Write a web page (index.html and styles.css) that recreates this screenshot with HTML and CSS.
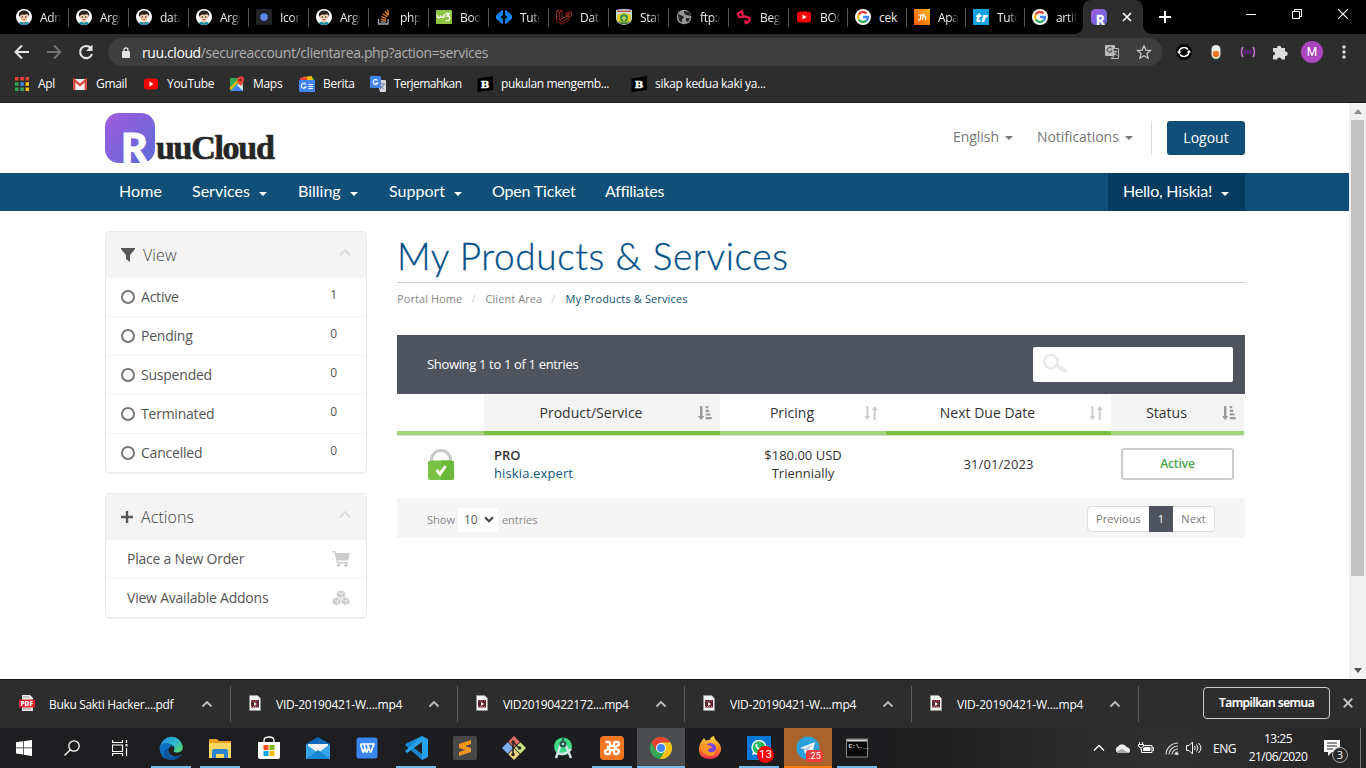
FILE: index.html
```html
<!DOCTYPE html>
<html lang="id">
<head>
<meta charset="utf-8">
<title>My Products &amp; Services - RuuCloud</title>
<link rel="stylesheet" href="styles.css">
</head>
<body>
<svg class="defs" aria-hidden="true">
  <defs>
    <linearGradient id="violet" x1="0" y1="0" x2="1" y2="1"><stop offset="0" stop-color="#a35be0"/><stop offset="1" stop-color="#5b6bd8"/></linearGradient>
    <linearGradient id="sea" x1="0" y1="0" x2="1" y2="1"><stop offset="0" stop-color="#1b87d6"/><stop offset=".5" stop-color="#2bb9d3"/><stop offset="1" stop-color="#5fd860"/></linearGradient>
    <linearGradient id="fire" x1="0" y1="0" x2="0" y2="1"><stop offset="0" stop-color="#ffde3d"/><stop offset=".5" stop-color="#ff8a1e"/><stop offset="1" stop-color="#f0284f"/></linearGradient>
    <linearGradient id="amber" x1="0" y1="1" x2="1" y2="0"><stop offset="0" stop-color="#ff5a0a"/><stop offset="1" stop-color="#ffb51c"/></linearGradient>
    <clipPath id="disc"><circle cx="8" cy="8" r="8"/></clipPath>
  </defs>
  <symbol id="avatar" viewBox="0 0 16 16"><circle cx="8" cy="8" r="8" fill="#fff"/><g clip-path="url(#disc)"><path d="M2.500 16c0-3 2-3.600 5.500-3.600s5.500.600 5.500 3.600z" fill="#1c8fa8"/><path d="M6 10h4v3l-2 1-2-1z" fill="#edc3a0"/><ellipse cx="8" cy="7.600" rx="4.300" ry="4.400" fill="#f7d3b5"/><path d="M3 8C2.300 3.500 4.500 1.300 8.300 1.400c4.200.1 5.400 3 4.700 6.600-.5-1.500-.8-2.400-1.800-2.800-2 .8-4 .4-5 .2C5 5.900 3.600 6.700 3 8z" fill="#26221f"/><circle cx="6.300" cy="8" r=".8" fill="#222"/><circle cx="9.700" cy="8" r=".8" fill="#222"/><path d="M6.500 10.200q1.500 1 3 0" stroke="#a33" fill="none" stroke-width=".7"/></g></symbol>
  <symbol id="google" viewBox="0 0 16 16"><circle cx="8" cy="8" r="8" fill="#fff"/><g fill="none" stroke-width="2.400"><path d="M11.600 4.500A5 5 0 0 0 3.700 5.500" stroke="#ea4335"/><path d="M3.700 5.500a5 5 0 0 0 0 5" stroke="#fbbc05"/><path d="M3.700 10.500a5 5 0 0 0 7.600 1.200" stroke="#34a853"/><path d="M8 8h5a5 5 0 0 1-1.700 3.700" stroke="#4285f4"/></g></symbol>
  <symbol id="tube" viewBox="0 0 16 16"><rect x="1" y="2.500" width="14" height="11" rx="3" fill="#f00"/><path d="M6.500 5.600v4.800L10.600 8z" fill="#fff"/></symbol>
  <symbol id="brainly" viewBox="0 0 16 16"><path d="M.5 2.500 16 0v14L.5 16z" fill="#000"/><text x="3.800" y="12" class="b-glyph">B</text></symbol>
  <symbol id="movie" viewBox="0 0 12 16"><path d="M.5.500h8L11.500 3.500v12H.5z" fill="#f8f8f8" stroke="#999" stroke-width=".6"/><path d="M8.500.500v3h3" fill="#ddd"/><rect x="2" y="5" width="8" height="7.500" fill="#5c2430"/><path d="M2 6h8M2 11.500h8" stroke="#e0716b" stroke-dasharray="1 1"/><path d="M5 7v4l3-2z" fill="#fff"/></symbol>
  <symbol id="up" viewBox="0 0 12 8"><path d="m1.500 6.500 4.500-4.500 4.500 4.500" fill="none" stroke="currentColor" stroke-width="1.900"/></symbol>
  <symbol id="sort" viewBox="0 0 14 14"><path d="M2.400 0h2v10h2L3.400 14 .4 10h2zM9.700 14h2V4h2L10.700 0l-3 4h2z" fill="currentColor"/></symbol>
  <symbol id="sorted" viewBox="0 0 14 14"><path d="M2 0h2.400v10h2L3.200 14 0 10h2zM7.700 0h2.500v2.200H7.700zM7.700 3.700h3.500v2.200H7.700zM7.700 7.400h4.700v2.200H7.700zM7.700 11h6v2.300h-6z" fill="currentColor"/></symbol>
  <symbol id="ruu" viewBox="0 0 50 50"><rect width="50" height="50" rx="14" fill="url(#violet)"/><text x="16" y="50" class="r-glyph">R</text></symbol>
</svg>

<header class="tabs">
  <div class="tab"><svg><use href="#avatar"/></svg><span>Adm</span></div>
  <div class="tab"><svg><use href="#avatar"/></svg><span>Argo</span></div>
  <div class="tab"><svg><use href="#avatar"/></svg><span>data</span></div>
  <div class="tab"><svg><use href="#avatar"/></svg><span>Argo</span></div>
  <div class="tab"><svg viewBox="0 0 16 16"><rect width="16" height="16" rx="1" fill="#202327"/><circle cx="8" cy="8" r="3.800" fill="#5b86f0"/></svg><span>Icon</span></div>
  <div class="tab"><svg><use href="#avatar"/></svg><span>Argo</span></div>
  <div class="tab"><svg viewBox="0 0 16 16" fill="none" stroke-width="1.300"><path d="M2.500 10v5h9.500v-5M4.500 12.800H10" stroke="#aaa"/><path d="m4.700 10.500 5.500.7M5.200 7.700l5.200 1.800M6.600 4.800l4.600 3M8.900 2.300l3.300 4.300M11.700.5l.9 5.400" stroke="#f48024"/></svg><span>php</span></div>
  <div class="tab"><svg viewBox="0 0 16 16"><rect y="1" width="16" height="14" fill="#8bc53f"/><path d="M1 5.500q0 3 2 3t1.500-2q0 2 2 2t2-3.500M9.500 4.500h4L11 7q4-.2 2.500 3.500-1.500 2.300-4 .8" fill="none" stroke="#fff" stroke-width="1.300"/></svg><span>Boo</span></div>
  <div class="tab"><svg viewBox="0 0 16 16"><path d="M7 2v3.700L4.700 8 7 10.300V14L6 15l-6-5.500v-3L6 1zM9 2v3.700L11.300 8 9 10.300V14l1 1 6-5.500v-3L10 1z" fill="#0a84ff"/></svg><span>Tuto</span></div>
  <div class="tab"><svg viewBox="0 0 16 16"><path d="M.6 1.800 3.300.5 6 1.800v8l6-3.500V3.500L14 2.300l1.500 1.200v3.400L13 8.200v2.600L6 15.300.6 12zM3.300 3.300V11L6 12.700l6-3.500M.6 1.800l2.700 1.500L6 1.800M10 3.700l3 1.500 2.500-1.700M13 5.200v3M6 9.800 3.300 11M10 3.700v3l3 1.500" fill="none" stroke="#a52b25" stroke-width=".9"/></svg><span>Data</span></div>
  <div class="tab"><svg viewBox="0 0 16 16"><path d="M0 1q8-2 16 0v9q-1 5-8 6-7-1-8-6z" fill="#b9dbe4"/><path d="M1 1.500h14v1.500H1z" fill="#d0524a"/><path d="M1 6q7-4 14 0v5q-2 4-7 4t-7-4z" fill="#e7ce24"/><circle cx="8" cy="9" r="4" fill="#3b9441"/><path d="M6 9h4M8 7v5" stroke="#fff27a"/><path d="M2 12q6 3 12 0l-3 3H5z" fill="#2d773b"/></svg><span>Stati</span></div>
  <div class="tab"><svg viewBox="0 0 16 16"><circle cx="8" cy="8" r="7.300" fill="#969696"/><path d="m2 5 5 2 1 2-2 1v4l-3-3zM8 2l5 1 2 4-5-1-2-2zM10 9h4l-2 4-2-1z" fill="#252525"/></svg><span>ftp:/</span></div>
  <div class="tab"><svg viewBox="0 0 16 16"><path d="M6.800 1.500 1.800 5l1.500 3.300L9 7.500l4.500 1.500v2.800L9.500 15M6.500 3v3.500M9.500 14.500V11" fill="none" stroke="#ef1b50" stroke-width="2.200"/></svg><span>Beg</span></div>
  <div class="tab narrow"><svg><use href="#tube"/></svg><span>BOO</span></div>
  <div class="tab narrow"><svg><use href="#google"/></svg><span class="full">cek</span></div>
  <div class="tab narrow"><svg viewBox="0 0 16 16"><rect width="16" height="16" fill="url(#amber)"/><path d="M7 5.500 6.500 10q-.3 1.300-2.500.7M9.300 4.500 8.600 11M9 8.200q3-1.500 2.800.3L11.500 11M4.500 6h7" fill="none" stroke="#fff" stroke-width="1.200"/></svg><span>Apa</span></div>
  <div class="tab narrow"><svg viewBox="0 0 16 16"><rect width="16" height="16" fill="#13a2e2"/><text x="2.500" y="12.500" class="tr-glyph">tr</text></svg><span>Tuto</span></div>
  <div class="tab narrow last"><svg><use href="#google"/></svg><span>artif</span></div>
  <div class="tab-active"><svg class="fav"><use href="#ruu"/></svg><svg class="close" viewBox="0 0 10 10"><path d="m1 1 8 8M9 1 1 9" stroke="#fff" stroke-width="1.700"/></svg></div>
  <svg class="new-tab" viewBox="0 0 12 12"><path d="M6 0v12M0 6h12" stroke="#fff" stroke-width="2"/></svg>
  <div class="window-buttons">
    <svg viewBox="0 0 10 10"><path d="M0 5.500h10" stroke="#fff"/></svg>
    <svg viewBox="0 0 10 10" fill="none" stroke="#fff"><path d="M.5 2.500h7v7h-7zM2.500 2.500v-2h7v7h-2"/></svg>
    <svg viewBox="0 0 10 10"><path d="m0 0 10 10M10 0 0 10" stroke="#fff" stroke-width="1.100"/></svg>
  </div>
</header>

<div class="toolbar">
  <svg class="nav-ic" viewBox="0 0 16 16" fill="none" stroke="#e4e4e4" stroke-width="2"><path d="M15 8H2M8 1.500 1.500 8 8 14.500"/></svg>
  <svg class="nav-ic" viewBox="0 0 16 16" fill="none" stroke="#737373" stroke-width="1.800"><path d="M1 8h13M8 1.500 14.500 8 8 14.500"/></svg>
  <svg class="nav-ic" viewBox="0 0 16 16"><path d="M12.800 4A6.100 6.100 0 1 0 14 10" fill="none" stroke="#e4e4e4" stroke-width="2.100"/><path d="M14.500.5V7H8z" fill="#e4e4e4"/></svg>
  <div class="omnibox">
    <svg class="lock" viewBox="0 0 8 11"><rect y="4" width="8" height="7" rx="1" fill="#e4e4e4"/><path d="M2 5V3q0-2.200 2-2.200T6 3v2" fill="none" stroke="#e4e4e4" stroke-width="1.300"/></svg>
    <div class="url"><b>ruu.cloud</b>/secureaccount/clientarea.php?action=services</div>
    <svg class="o-ic" viewBox="0 0 16 16"><rect x="1" y="1" width="10" height="11" rx="1" fill="#bbb"/><path d="M8 4.300A2.600 2.600 0 1 0 8.300 7H6" stroke="#3c3c3c" fill="none"/><path d="M9 4.500h5.500v10H7L10 12z" fill="#3c3c3c" stroke="#bbb"/><path d="M8.500 7.500h5M11 6.500v1M12.500 7.500q-1 3-3.500 4M9.500 8q1.500 2.500 4 3.500" stroke="#bbb" stroke-width=".9" fill="none"/></svg>
    <svg class="o-ic star" viewBox="0 0 16 16"><path d="m8 1.800 1.900 4.300 4.600.4-3.500 3.100 1 4.600L8 11.800l-4 2.400 1-4.600-3.500-3.100 4.600-.4z" fill="none" stroke="#c4c4c4" stroke-width="1.300"/></svg>
  </div>
  <div class="extensions">
    <svg viewBox="0 0 16 16"><circle cx="8" cy="8" r="8" fill="#000"/><path d="M3 8a5 5 0 0 1 9-2.500M13 8a5 5 0 0 1-9 2.500" fill="none" stroke="#fff" stroke-width="1.500"/><path d="m.8 7.500 2.400 2.800 2.300-2.800zM15.200 8.500 13 5.700l-2.500 2.800z" fill="#fff"/></svg>
    <svg viewBox="0 0 16 16"><rect x="3.500" y="1" width="9" height="14" rx="4.500" fill="#eaf0ed"/><circle cx="8" cy="10" r="3.300" fill="#f5792b"/></svg>
    <svg viewBox="0 0 16 16"><circle cx="8" cy="8" r="1.600" fill="#7b1fa2"/><path d="M5.500 5.500q-1.500 2.500 0 5M10.500 5.500q1.500 2.500 0 5" fill="none" stroke="#7b1fa2" stroke-width="1.300"/><path d="M3 3Q0 8 3 13M13 3q3 5 0 10" fill="none" stroke="#c27ad2" stroke-width="1.500"/></svg>
    <svg viewBox="0 0 16 16"><path d="M1 4h4a2.200 2.200 0 1 1 4.400 0H13v3.700a2.200 2.200 0 1 1 0 4.300v3.500H9.400a2.100 2.100 0 1 0-4.200 0H1v-4a2 2 0 1 0 0-4z" fill="#dedede"/></svg>
    <div class="profile">M</div>
    <svg class="menu" viewBox="0 0 16 16" fill="#dedede"><circle cx="8" cy="3" r="1.700"/><circle cx="8" cy="8" r="1.700"/><circle cx="8" cy="13" r="1.700"/></svg>
  </div>
</div>

<nav class="bookmarks">
  <a class="bk1"><svg viewBox="0 0 16 16"><g><path fill="#ea4335" d="M1 1h3.500v3.500H1zM6.300 1h3.500v3.500H6.300zM11.500 1H15v3.500h-3.500z"/><path fill="#34a853" d="M1 6.300h3.500v3.500H1zM1 11.500h3.500V15H1z"/><path fill="#4285f4" d="M6.300 6.300h3.500v3.500H6.300z"/><path fill="#34a853" d="M6.300 11.500h3.500V15H6.300z"/><path fill="#fbbc05" d="M11.500 6.300H15v3.500h-3.500zM11.500 11.500H15V15h-3.500z"/></g></svg><span>Apl</span></a>
  <a class="bk2"><svg viewBox="0 0 16 16"><rect x="1" y="3" width="14" height="11" rx="1" fill="#f4f4f4"/><path d="M2.200 14V4L8 9l5.800-5v10" fill="none" stroke="#db4437" stroke-width="2.300"/></svg><span>Gmail</span></a>
  <a class="bk3"><svg><use href="#tube"/></svg><span>YouTube</span></a>
  <a class="bk4"><svg viewBox="0 0 16 16"><rect x="1" y="2" width="13" height="13" rx="1" fill="#34a853"/><path d="M2 15 13 4l1 11z" fill="#eee"/><path d="m2 15 6-6 6 6z" fill="#4285f4"/><path d="m1 13 8-8" stroke="#fbbc05" stroke-width="2"/><path d="M11.500 10Q8 6.500 8 4t3.500-3.500T15 4q0 2.500-3.500 6z" fill="#ea4335"/><circle cx="11.500" cy="4" r="1.300" fill="#7d211c"/></svg><span>Maps</span></a>
  <a class="bk5"><svg viewBox="0 0 16 16"><path d="M1 2h14v4H1z" fill="#34a853"/><path d="m4 1 9-1 1 5H4z" fill="#fbbc05"/><path d="m1 2 7-1v5H1z" fill="#ea4335"/><rect y="4" width="16" height="12" rx="1" fill="#4285f4"/><path d="M7 8.500A2.500 2.500 0 1 0 7 11H5M9.500 8.500H14M9.500 10.500H14M9.500 12.500H14" stroke="#fff" fill="none" stroke-width="1.200"/></svg><span>Berita</span></a>
  <a class="bk6"><svg viewBox="0 0 16 16"><path d="M7 4h8q1 0 1 1v10q0 1-1 1H10z" fill="#d8d8d8"/><rect width="11" height="12" rx="1" fill="#4285f4"/><path d="M7.500 4.500A2.400 2.400 0 1 0 7.800 7H5.500" stroke="#fff" fill="none" stroke-width="1.100"/><path d="M9 8h6M12 7v1M14 8q-1 3-4 5M10 9q1 2 4 4" stroke="#6587b4" fill="none"/></svg><span>Terjemahkan</span></a>
  <a class="bk7"><svg><use href="#brainly"/></svg><span>pukulan mengemb...</span></a>
  <a class="bk8"><svg><use href="#brainly"/></svg><span>sikap kedua kaki ya...</span></a>
</nav>

<div class="viewport">
  <div class="page">
    <div class="site-head">
      <div class="logo"><svg><use href="#ruu"/></svg><span>uuCloud</span></div>
      <div class="top-links"><span class="caret t-eng">English</span><span class="caret t-not">Notifications</span><i></i><a class="logout">Logout</a></div>
    </div>
    <div class="site-nav">
      <div class="links"><a class="n1">Home</a><a class="n2 caret">Services</a><a class="n3 caret">Billing</a><a class="n4 caret">Support</a><a class="n5">Open Ticket</a><a class="n6">Affiliates</a></div>
      <a class="hello caret">Hello, Hiskia!</a>
    </div>
    <div class="content">
      <aside>
        <section class="panel">
          <h3><svg viewBox="0 0 14 14"><path d="M0 0h14v1L9 7v7l-4-3V7L0 1z" fill="#555"/></svg><span>View</span><svg class="chev"><use href="#up"/></svg></h3>
          <div class="row"><i></i><span>Active</span><b>1</b></div>
          <div class="row"><i></i><span>Pending</span><b>0</b></div>
          <div class="row"><i></i><span>Suspended</span><b>0</b></div>
          <div class="row"><i></i><span>Terminated</span><b>0</b></div>
          <div class="row"><i></i><span>Cancelled</span><b>0</b></div>
        </section>
        <section class="panel">
          <h3 class="actions"><svg viewBox="0 0 12 12"><path d="M6 0v12M0 6h12" stroke="#555" stroke-width="2.400"/></svg><span>Actions</span><svg class="chev"><use href="#up"/></svg></h3>
          <div class="row act"><span>Place a New Order</span><svg viewBox="0 0 18 16" fill="#ccc"><path d="M0 0h3.500l.5 2h14l-1.800 7.500H6l.3 1.500h9.500v1.500H5L2.500 1.500H0z"/><circle cx="6.500" cy="14.300" r="1.700"/><circle cx="14" cy="14.300" r="1.700"/></svg></div>
          <div class="row act"><span>View Available Addons</span><svg viewBox="0 0 18 16"><g fill="#ccc" stroke="#fff" stroke-width=".6"><path d="m9 0 4.300 1.800v4.700L9 8.500 4.700 6.500V1.800zM4.800 7l4.200 1.800v4.700l-4.200 2-4.500-2V8.800zM13.200 7l4.500 1.800v4.700l-4.500 2-4.200-2V8.800z"/><path d="m5.500 2.400 3.500 1.500 3.500-1.500M1.200 9.400l3.600 1.500 3.600-1.500M9.600 9.400l3.600 1.500 3.600-1.500M9.800 4v3.600M5.600 11v3.600M14 11v3.600" fill="none"/></g></svg></div>
        </section>
      </aside>
      <main>
        <h1>My Products &amp; Services</h1>
        <div class="crumbs"><span>Portal Home</span><em>/</em><span>Client Area</span><em>/</em><span class="here">My Products &amp; Services</span></div>
        <div class="table-top"><span>Showing 1 to 1 of 1 entries</span><div class="search"><svg viewBox="0 0 26 22" fill="none" stroke="#e7e9ea"><circle cx="8" cy="8.500" r="6.700" stroke-width="2.500"/><path d="m14 12.500 8 5.500" stroke-width="4" stroke-linecap="round"/></svg></div></div>
        <div class="grid thead">
          <div></div>
          <div class="sorted dark"><span>Product/Service</span><svg><use href="#sorted"/></svg></div>
          <div><span>Pricing</span><svg><use href="#sort"/></svg></div>
          <div class="dark"><span>Next Due Date</span><svg><use href="#sort"/></svg></div>
          <div class="sorted"><span>Status</span><svg><use href="#sorted"/></svg></div>
        </div>
        <div class="grid tbody">
          <div><svg class="padlock" viewBox="0 0 26 32"><path d="M3.500 15v-3a9.500 9.500 0 0 1 19 0v3" fill="none" stroke="#c8c8c8" stroke-width="3"/><path d="M0 13.500 3 12.500h20l3 1v16q0 2.500-2.500 2.500h-21Q0 32 0 29.500z" fill="#7bc144"/><path d="M13 12.500h10l3 1v16q0 2.500-2.500 2.500H13z" fill="#6cb838"/><path d="m8.500 22 3.500 4 5.500-8" fill="none" stroke="#fff" stroke-width="3"/></svg></div>
          <div class="product"><strong>PRO</strong><a>hiskia.expert</a></div>
          <div class="price"><span>$180.00 USD</span><span>Triennially</span></div>
          <div class="due">31/01/2023</div>
          <div class="stat"><span>Active</span></div>
        </div>
        <div class="table-foot"><span>Show</span><div class="select">10<svg viewBox="0 0 10 7"><path d="m1 1.200 4 4 4-4" fill="none" stroke="#444" stroke-width="2.200"/></svg></div><span>entries</span><div class="pager"><a class="prev">Previous</a><a class="cur">1</a><a class="next">Next</a></div></div>
      </main>
    </div>
  </div>
  <div class="scroll"><svg viewBox="0 0 8 5"><path d="M0 5h8L4 0z" fill="#8b8b8b"/></svg><div class="thumb"></div><svg viewBox="0 0 8 5"><path d="M0 0h8L4 5z" fill="#505050"/></svg></div>
</div>

<div class="downloads">
  <div class="dl"><svg class="file pdf" viewBox="0 0 16 16"><path d="M3 0h8l3 3v13H3z" fill="#eee"/><path d="M4 2h6M4 14h8" stroke="#999"/><rect y="4.500" width="16" height="8" rx="1" fill="#e3202c"/><text x="1.500" y="11" class="pdf-glyph">PDF</text></svg><span class="d1">Buku Sakti Hacker....pdf</span><svg class="dchev"><use href="#up"/></svg></div>
  <div class="dl"><svg class="file"><use href="#movie"/></svg><span>VID-20190421-W....mp4</span><svg class="dchev"><use href="#up"/></svg></div>
  <div class="dl"><svg class="file"><use href="#movie"/></svg><span class="d3">VID20190422172....mp4</span><svg class="dchev"><use href="#up"/></svg></div>
  <div class="dl"><svg class="file"><use href="#movie"/></svg><span>VID-20190421-W....mp4</span><svg class="dchev"><use href="#up"/></svg></div>
  <div class="dl"><svg class="file"><use href="#movie"/></svg><span>VID-20190421-W....mp4</span><svg class="dchev"><use href="#up"/></svg></div>
  <a class="show-all">Tampilkan semua</a>
  <svg class="dclose" viewBox="0 0 10 10"><path d="m.7.700 8.600 8.600M9.300.700.700 9.300" stroke="#ccc" stroke-width="1.800"/></svg>
</div>

<footer class="taskbar">
  <div class="sys"><svg class="s16" viewBox="0 0 16 16" fill="#fff"><path d="M0 2.300 7 1.300v6.300H0zM7.700 1.200 16 0v7.600H7.700zM0 8.300h7v6.300l-7-1zM7.700 8.300H16V16l-8.300-1.200z"/></svg></div>
  <div class="sys"><svg class="s16" viewBox="0 0 16 16" fill="none" stroke="#fff" stroke-width="1.300"><circle cx="10" cy="6" r="5.200"/><path d="M6.300 9.700.500 15.500"/></svg></div>
  <div class="sys"><svg class="s16" viewBox="0 0 16 16" fill="none" stroke="#fff" stroke-width="1.200"><path d="M.5 0v2.500h10V0M.5 5h10v6.500H.5zM.5 16v-2.500h10V16M14.500 0v3M14.500 8v8"/><path d="M13.500 4h2v2.500h-2z" fill="#fff" stroke="none"/></svg></div>
  <div class="app on edge"><svg viewBox="0 0 24 24"><path d="M1 11A11.500 11.500 0 0 1 23.700 10c.8 5-3 7-7 6.500-2-.3-2.500-1-1.500-2.500 1-4-2-6-6-6Q4 8 1 11z" fill="url(#sea)"/><path d="M.4 12Q1 7 7 7q6 0 7.500 4.500Q12 9 9.800 12q-2 5 4 8 5 2 9-2Q19 24 12 24 1.500 23.500.4 12z" fill="#1170bd"/><path d="M9.500 12q-3 7 4 9 5 1 9-3Q18 24.500 12 24 3 22 5.500 15 7 12 9.500 12z" fill="#0c519b"/></svg></div>
  <div class="app on"><svg viewBox="0 0 24 24"><path d="M1 3h8l2 2h12v17H1z" fill="#e6a21d"/><rect x="1" y="7" width="22" height="15" fill="#ffd75e"/><path d="M4 22v-7q0-2 2-2h12q2 0 2 2v7h-4v-4H8v4z" fill="#2a84ce"/></svg></div>
  <div class="app"><svg viewBox="0 0 24 24"><path d="M7 8V4.500Q7 1 12 1t5 3.500V8" fill="none" stroke="#fff" stroke-width="1.300"/><path d="M1 6h22v15q0 2-2 2H3q-2 0-2-2z" fill="#fff"/><path d="M6.500 9h5v5h-5z" fill="#f25022"/><path d="M12.500 9h5v5h-5z" fill="#7fba00"/><path d="M6.500 15h5v5h-5z" fill="#00a4ef"/><path d="M12.500 15h5v5h-5z" fill="#ffb900"/></svg></div>
  <div class="app"><svg viewBox="0 0 24 24"><path d="M0 8 12 1l12 7v15H0z" fill="#0f6cbd"/><path d="M2 8h20v9H2z" fill="#f3f3f3"/><path d="m0 8 12 9 12-9v15H0z" fill="#36a4e9"/><path d="M0 23 12 14l12 9z" fill="#1887d5"/></svg></div>
  <div class="app"><svg viewBox="0 0 24 24"><rect x="1.500" y="1.500" width="21" height="21" rx="2.500" fill="#3786f1"/><path d="M5.500 8h13.300L16 15.800h-.8L12.500 8M9 8.500l2.300 7.300h.6L14 10M5.500 8l2.300 7.800h.8L10 12" fill="none" stroke="#fff" stroke-width="1.700"/></svg></div>
  <div class="app on"><svg viewBox="0 0 24 24"><path d="M18 0v24L1 9l2-2z" fill="#1687cc"/><path d="M18 0 1 15l2 2L18 6zM18 0l6 3v18l-6 3z" fill="#26a2ed"/><path d="m18 6-8 6 8 6z" fill="#1f1f20"/></svg></div>
  <div class="app"><svg viewBox="0 0 24 24"><rect width="24" height="24" rx="2" fill="#484848"/><path d="m18 4-12 4v4l12-4z" fill="#ff9800"/><path d="m6 8 12 4v4L6 12zM18 12v4L6 20v-4z" fill="#f7941e"/></svg></div>
  <div class="app"><svg viewBox="0 0 24 24"><path d="m12 0 5.700 5.700L12 11.400 6.300 5.700z" fill="#e76e62"/><path d="m5.700 6.300 5.700 5.700-5.700 5.700L0 12z" fill="#7fadf0"/><path d="m18.300 6.300 5.700 5.700-5.700 5.700-5.700-5.700z" fill="#c9e584"/><path d="m12 12.600 5.700 5.700L12 24l-5.700-5.700z" fill="#f0d67d"/><path d="M11 5v14M11 6l6 6" stroke="#302a28" stroke-width="1.600"/><circle cx="11" cy="6" r="1.800" fill="#302a28"/><circle cx="11" cy="18.500" r="1.800" fill="#302a28"/><circle cx="17.500" cy="12" r="1.800" fill="#302a28"/></svg></div>
  <div class="app"><svg viewBox="0 0 24 24"><circle cx="12" cy="10.500" r="9" fill="#3ddc84"/><path d="M11 5 5 22M13 5l7 17M6 16q6 5 14-3" fill="none" stroke="#d6e6e8" stroke-width="2.400"/><circle cx="12" cy="8" r="3.500" fill="#24564b"/><circle cx="12" cy="8" r="1.300" fill="#9ce7b9"/><path d="M12 1v4" stroke="#24564b" stroke-width="1.600"/></svg></div>
  <div class="app on"><svg viewBox="0 0 24 24"><rect width="24" height="24" rx="4" fill="#f37623"/><path d="M5.500 6h3.300q1.200 0 1.200 1.500V10h4V7.500Q14 6 15.500 6h1.500q2 0 2 1.800T17 9.800L15 12l2 1.500q2 .2 2 2T17 18h-1.500q-1.500 0-1.500-1.500V14h-4v2.500Q10 18 8.500 18H7q-2 0-2-2t2-2.200L9 12 7 10" fill="none" stroke="#fff" stroke-width="2.300" stroke-linejoin="round"/></svg></div>
  <div class="app on active"><svg viewBox="0 0 24 24"><circle cx="12" cy="12" r="11" fill="#34a853"/><path d="M2.500 6.500A11 11 0 0 1 21.500 6.500H12l-5 8z" fill="#ea4335"/><path d="M21.500 6.500A11 11 0 0 1 11 23l5.500-9-4.500-7.500z" fill="#fbc116"/><circle cx="12" cy="12" r="5" fill="#fff"/><circle cx="12" cy="12" r="4" fill="#4285f4"/></svg></div>
  <div class="app"><svg viewBox="0 0 24 24"><path d="M4 5q1-2 2-3l2 3q2-2 4-1 0-3 4-4 0 3 4 6 5 5 2 11t-10 6Q2 23 1 15 .5 9 4 5z" fill="url(#fire)"/><circle cx="12.500" cy="12.500" r="5.500" fill="#7542e5"/><path d="M2 9q5-2 8 0 4 1 4 3-4 0-4 3 4 3 8-1-1 6-6 6-8-1-10-11z" fill="#ff9621"/></svg></div>
  <div class="app on"><svg viewBox="0 0 24 24"><rect width="24" height="24" fill="#0078d7"/><circle cx="12" cy="11.500" r="7" fill="#23b85a" stroke="#fff" stroke-width="1.400"/><path d="m5 19 1.200-4L9 17.800z" fill="#fff"/><path d="M9 7.500q-2 3 2 6t6 .5l-2.500-2-1.500 1-3-3 1-1z" fill="#fff"/></svg><b class="badge">13</b></div>
  <div class="app on alert"><svg viewBox="0 0 24 24"><circle cx="12" cy="12" r="11.500" fill="#2aa1da"/><path d="m4 12 15-6-3 13-5-4-2 3-1-5z" fill="#f4f9fc"/><path d="m8 13 9-5-6 7" fill="#b3cddd"/></svg><b class="badge sq">.25</b></div>
  <div class="app on cmd"><svg viewBox="0 0 24 24"><rect x="1.500" y="3" width="21" height="18" fill="#080808" stroke="#888"/><path d="M2 4.500h20" stroke="#d5d5d5" stroke-width="2"/><text x="3.500" y="12" class="cmd-glyph">C:\.__</text></svg></div>
  <div class="tray">
    <svg class="t1" viewBox="0 0 12 8"><path d="m1 6.500 5-5 5 5" fill="none" stroke="#fff" stroke-width="1.300"/></svg>
    <svg class="t2" viewBox="0 0 16 10"><path d="M4 10a3.500 3.500 0 0 1 0-6.500A5 5 0 0 1 12.500 4Q16 4.500 16 7.500T13 10z" fill="#eee"/><path d="M3 10q0-3 5-4l7 4z" fill="#aaa"/></svg>
    <svg class="t3" viewBox="0 0 16 12" fill="none" stroke="#fff"><path d="M5.500 3.500h8.500v7H3.500V7M14.500 5.500h1v3h-1M1.500 0v2M4.500 0v2M.5 2.500h5v2l-2 1h-1l-2-1zM3 5.500v2"/><path d="M6.500 5.500H12v3H5.500V6" fill="#fff"/></svg>
    <svg class="t4" viewBox="0 0 14 14" fill="none" stroke="#ddd" stroke-width="1.200"><path d="M1 13.500A12 12 0 0 1 13 2M4 13.500A9 9 0 0 1 13 5M7 13.500A6 6 0 0 1 13 8M10 13.500A3 3 0 0 1 13 11"/><circle cx="12" cy="13" r="1" fill="#fff"/></svg>
    <svg class="t5" viewBox="0 0 16 14" fill="none" stroke="#fff"><path d="M.5 4.500H3L6.500 1v12L3 9.500H.5zM8.500 5q1.500 2 0 4M10.500 3.500q3 3.500 0 7M12.500 2q5 5 0 10"/></svg>
    <span class="lang">ENG</span>
    <div class="clock"><span>13:25</span><span>21/06/2020</span></div>
    <div class="notify"><svg viewBox="0 0 16 16"><path d="M0 0h16v12H8l-4 4v-4H0z" fill="#fff"/><path d="M3 3h10M3 6h10M3 9h6" stroke="#252525"/></svg><b>3</b></div>
  </div>
</footer>
</body>
</html>
```
FILE: styles.css
```css
* { box-sizing: border-box; }
body { margin: 0; width: 1366px; height: 768px; overflow: hidden; display: flex; flex-direction: column; font-family: "Open Sans", "Noto Sans", sans-serif; background: #fff; }
svg { display: block; flex: none; }
.defs { position: absolute; width: 0; height: 0; }
.b-glyph { font: 900 10px "DejaVu Serif", serif; fill: #fff; stroke: #fff; stroke-width: .5px; }
.r-glyph { font: 900 41px Lato, sans-serif; fill: #fff; stroke: #fff; stroke-width: 1px; }
.tr-glyph { font: italic 900 13px "Open Sans", sans-serif; fill: #fff; }
.pdf-glyph { font: 800 6.5px "Open Sans", sans-serif; fill: #fff; }
.cmd-glyph { font: 700 6px "Liberation Mono", monospace; fill: #eee; }

/* Browser tabs */
.tabs { height: 34px; flex: none; background: #000; display: flex; padding-left: 8px; color: #f0f0f0; }
.tab { width: 60px; height: 34px; display: flex; align-items: center; padding-left: 8px; position: relative; }
.tab.narrow { width: 59px; padding-left: 8px; }
.tab::after { content: ""; position: absolute; right: -1px; top: 8px; width: 1px; height: 19px; background: #555; }
.tab.last::after { display: none; }
.tab svg { width: 16px; height: 16px; }
.tab span { margin-left: 8px; width: 21px; overflow: hidden; white-space: nowrap; font-size: 12px; letter-spacing: -.3px; -webkit-mask-image: linear-gradient(90deg, #000 55%, transparent); mask-image: linear-gradient(90deg, #000 55%, transparent); }
.tab .full { -webkit-mask-image: none; mask-image: none; }
.tab-active { width: 60px; height: 34px; background: #2d2d2d; border-radius: 8px 8px 0 0; display: flex; align-items: center; padding-left: 8px; position: relative; }
.tab-active::before, .tab-active::after { content: ""; position: absolute; bottom: 0; width: 8px; height: 8px; }
.tab-active::before { left: -8px; background: radial-gradient(circle at 0 0, transparent 7.5px, #2d2d2d 8px); }
.tab-active::after { right: -8px; background: radial-gradient(circle at 100% 0, transparent 7.5px, #2d2d2d 8px); }
.fav { width: 16px; height: 16px; }
.close { width: 10px; height: 10px; margin-left: 15px; }
.new-tab { width: 12px; height: 12px; margin: 11px 0 0 16px; }
.window-buttons { display: flex; gap: 36px; margin: 9px 0 0 75px; }
.window-buttons svg { width: 10px; height: 10px; }

/* Address bar */
.toolbar { height: 36px; flex: none; background: #2d2d2d; display: flex; align-items: center; padding-left: 14px; }
.nav-ic { width: 16px; height: 16px; margin-right: 16px; }
.omnibox { width: 1054px; height: 28px; margin-left: -2px; border-radius: 14px; background: #3e3e3e; display: flex; align-items: center; padding: 0 10px 0 14px; }
.lock { width: 8px; height: 11px; }
.url { margin-left: 12px; flex: 1; font-size: 14px; color: #aeaeae; letter-spacing: -.4px; line-height: 28px; padding-top: 1px; }
.url b { color: #fff; font-weight: 400; }
.o-ic { width: 16px; height: 16px; margin-left: 16px; }
.extensions { display: flex; align-items: center; gap: 16px; margin-left: 14px; }
.extensions svg { width: 16px; height: 16px; }
.profile { width: 22px; height: 22px; border-radius: 50%; background: #ab47bc; color: #fff; text-align: center; font: 12px/22px Roboto, sans-serif; margin: 0 -3px; }

/* Bookmarks */
.bookmarks { height: 33px; flex: none; background: #2d2d2d; border-bottom: 1px solid #1b1b1b; display: flex; padding: 6px 0 0 14px; color: #fff; font-size: 12px; }
.bookmarks a { display: flex; align-items: flex-start; height: 16px; line-height: 16px; letter-spacing: -.3px; white-space: nowrap; }
.bookmarks svg { width: 16px; height: 16px; margin-right: 8px; }
.bk1 { width: 58px; }
.bk2 { width: 71px; }
.bk3 { width: 86px; }
.bk4 { width: 70px; }
.bk5 { width: 71px; }
.bookmarks .bk6 { width: 107px; letter-spacing: -.55px; }
.bookmarks .bk7 { width: 154px; letter-spacing: -.38px; }

/* Web page */
.viewport { height: 576px; flex: none; display: flex; }
.page { width: 1349px; overflow: hidden; background: #fff; }
.scroll { width: 17px; background: #f1f1f1; display: flex; flex-direction: column; align-items: center; padding: 6px 0; justify-content: space-between; }
.scroll svg { width: 8px; height: 5px; }
.thumb { width: 13px; height: 456px; background: #c1c1c1; margin: 6px 0 auto; }
.caret::after { content: ""; display: inline-block; border: 4px solid transparent; border-top-color: currentColor; border-bottom: 0; vertical-align: middle; margin-left: 6px; }
.site-head { height: 70px; padding: 0 104px 0 105px; display: flex; justify-content: space-between; }
.logo { display: flex; padding-top: 10px; }
.logo svg { width: 50px; height: 50px; overflow: visible; }
.logo span { font: 700 34px/50px "Liberation Serif", serif; letter-spacing: -1.3px; color: #262626; margin: 10px 0 0 1px; -webkit-text-stroke: .7px #262626; }
.top-links { display: flex; margin-top: 18px; height: 34px; line-height: 32px; font-size: 14px; color: #777; }
.t-eng { width: 84px; letter-spacing: -.05px; }
.t-not { width: 114px; letter-spacing: -.05px; }
.top-links i { width: 1px; background: #ddd; margin-right: 15px; }
.logout { width: 78px; background: #0f4f78; color: #fff; border-radius: 3px; text-align: center; line-height: 34px; }
.site-nav { height: 38px; background: #0f4f78; display: flex; justify-content: space-between; padding: 0 104px 0 105px; color: #fff; font: 16px/36px Lato, sans-serif; white-space: nowrap; }
.links { display: flex; padding-left: 14px; }
.links a, .hello { height: 38px; }
.site-nav .caret::after { margin-left: 9px; margin-top: 2px; }
.n1 { width: 73px; letter-spacing: .1px; }
.n2 { width: 106px; }
.n3 { width: 91px; }
.n4 { width: 103px; }
.n5 { width: 113px; letter-spacing: -.15px; }
.n6 { letter-spacing: -.3px; }
.hello { width: 137px; background: #053b5f; padding-left: 15px; letter-spacing: -.2px; }
.content { padding: 20px 104px 0 105px; display: flex; gap: 30px; }
aside { width: 262px; }
.panel { border: 1px solid #ebebeb; border-radius: 4px; margin-bottom: 20px; box-shadow: 0 1px 1px rgba(0,0,0,.05); overflow: hidden; }
.panel h3 { margin: 0; height: 46px; background: #f4f4f4; display: flex; align-items: center; padding: 0 15px; font-size: 16px; font-weight: 300; color: #444; letter-spacing: .1px; }
.panel h3 svg { width: 14px; height: 14px; margin-right: 8px; }
.panel h3.actions svg:first-child { width: 12px; height: 12px; }
.panel h3 .chev, .panel h3.actions .chev { width: 14px; height: 9px; margin: -5px -1px 0 auto; color: #ddd; }
.row { height: 39px; display: flex; align-items: center; padding: 0 29px 2px 15px; font-size: 14px; color: #555; border-top: 1px solid #f2f2f2; letter-spacing: -.22px; }
.row i { width: 14px; height: 14px; border: 2px solid #777; border-radius: 50%; margin: 1px 6px 0 0; }
.row b { margin-left: auto; font-size: 12px; font-weight: 400; margin-top: -4px; }
h3 + .row { border-top: 0; height: 38px; }
.row.act { padding: 0 15px 2px 21px; justify-content: space-between; }
.row.act svg { width: 18px; height: 16px; margin: 2px 1px 0 0; }
main { width: 848px; }
h1 { margin: 0; height: 52px; border-bottom: 1px solid #ccc; font: 300 37px/50px Lato, sans-serif; color: #00508a; letter-spacing: .62px; white-space: nowrap; -webkit-text-stroke: .3px #00508a; }
.crumbs { height: 52px; padding-top: 8px; font-size: 11px; line-height: 16px; color: #888; display: flex; letter-spacing: .08px; }
.crumbs em { font-style: normal; color: #ccc; padding: 0 10px 0 9px; }
.crumbs .here { color: #0f4f78; letter-spacing: .13px; }
.table-top { height: 59px; background: #4f535f; color: #fff; display: flex; align-items: center; justify-content: space-between; padding: 0 12px 0 30px; font-size: 13px; letter-spacing: -.34px; }
.table-top span { margin-top: -2px; }
.search { width: 200px; height: 35px; background: #fff; border-radius: 2px; padding: 6px 10px; }
.search svg { width: 26px; height: 22px; }
.grid { display: grid; grid-template-columns: 87px 236px 166px 225px 133px; width: 847px; }
.thead { height: 42px; padding-top: 1px; border-bottom: 1px solid #ddd; font-size: 14px; color: #333; }
.thead > div { border-bottom: 4px solid #a2d47b; padding: 0 8px 0 0; display: flex; align-items: center; }
.thead > .dark { border-color: #7ac142; }
.thead > .sorted { background: #f4f4f4; color: #333; }
.thead span { flex: 1; text-align: center; margin-top: -2px; }
.thead svg { width: 14px; height: 14px; color: #ccc; }
.thead .sorted svg { color: #999; }
.tbody { height: 62px; font-size: 13px; line-height: 18px; color: #333; padding-top: 10px; }
.padlock { width: 26px; height: 32px; margin: 2px 0 0 31px; }
.product { padding-left: 10px; display: flex; flex-direction: column; }
.product strong { font-weight: 600; }
.product a { color: #0f5580; letter-spacing: .12px; }
.price { display: flex; flex-direction: column; text-align: center; }
.due { text-align: center; padding-top: 9px; letter-spacing: .1px; }
.stat span { display: block; width: 113px; height: 32px; margin: 2px 0 0 10px; border: 2px solid #ccc; border-radius: 3px; text-align: center; font-size: 12px; font-weight: 600; line-height: 28px; color: #46a546; letter-spacing: -.1px; }
.table-foot { height: 40px; background: #f5f5f5; display: flex; align-items: center; font-size: 11px; color: #888; line-height: 20px; padding: 3px 30px 0; }
.select { width: 40px; height: 24px; border-radius: 3px; background: #fff; color: #555; font-size: 12px; line-height: 24px; margin: 0 4px 0 3px; padding-left: 6px; display: flex; align-items: center; gap: 6px; }
.select svg { width: 10px; height: 7px; }
.pager { margin: -2px 0 0 auto; height: 26px; display: flex; border: 1px solid #ddd; border-radius: 4px; background: #fff; line-height: 24px; text-align: center; color: #777; letter-spacing: .08px; }
.prev { width: 61px; }
.cur { width: 24px; background: #4f535f; color: #fff; height: 26px; margin-top: -1px; line-height: 26px; }
.next { width: 41px; }

/* Download shelf */
.downloads { height: 49px; flex: none; background: #2d2d2d; border-top: 1px solid #1b1b1b; display: flex; color: #fff; font-size: 12px; padding-left: 4px; }
.dl { width: 227px; height: 36px; margin-top: 6px; border-right: 1px solid #5a5a5a; display: flex; align-items: center; padding-left: 19px; }
.file { width: 12px; height: 16px; margin: -2px 0 0 -1px; }
.pdf { width: 16px; margin-left: -4px; }
.dl span { margin-left: 15px; width: 147px; white-space: nowrap; letter-spacing: -.22px; }
.dl .d1 { letter-spacing: -.34px; margin-left: 14px; }
.dl .d3 { letter-spacing: -.34px; }
.dchev { width: 12px; height: 8px; color: #bbb; margin-left: 5px; }
.show-all { width: 127px; height: 32px; margin: 7px 0 0 64px; border: 1px solid #ccc; border-radius: 4px; text-align: center; line-height: 29px; font-weight: 600; letter-spacing: -.5px; -webkit-text-stroke: .2px #fff; }
.dclose { width: 10px; height: 10px; margin: 18px 0 0 13px; }

/* Taskbar */
.taskbar { height: 40px; flex: none; background: linear-gradient(90deg, #1e1e20, #1d1d1f 65%, #303030 85%, #252527); display: flex; color: #fff; }
.sys { width: 48px; padding: 12px 16px; }
.s16 { width: 16px; height: 16px; }
.app { width: 49px; height: 40px; padding: 8px 12px; position: relative; }
.edge { margin-left: 3px; }
.app svg { width: 24px; height: 24px; }
.on::after { content: ""; position: absolute; left: 4px; bottom: 0; width: 40px; height: 2px; background: #76b9ed; }
.active, .alert { width: 48px; }
.active { background: #4c4d4e; margin-right: 1px; }
.alert { background: #aa632b; margin-right: 1px; }
.active::after, .alert::after { left: 0; width: 48px; }
.alert::after { background: #ff7a00; }
.badge { position: absolute; left: 22px; top: 18px; width: 17px; height: 17px; border-radius: 50%; background: #f00; color: #fff; text-align: center; font: 11.5px/17px Roboto, sans-serif; }
.badge.sq { height: 12px; top: 22px; left: 22px; line-height: 12px; font-size: 9px; border-radius: 3px; background: #ef3c3c; }
.tray { margin-left: auto; display: flex; align-items: center; width: 273px; }
.t1 { width: 12px; height: 8px; }
.t2 { width: 16px; height: 10px; margin-left: 9px; }
.t3 { width: 16px; height: 12px; margin-left: 8px; }
.t4 { width: 14px; height: 14px; margin-left: 11px; }
.t5 { width: 16px; height: 14px; margin-left: 7px; }
.lang { width: 35px; padding-left: 11px; font-size: 12px; letter-spacing: -.5px; }
.clock { width: 60px; margin-left: 11px; display: flex; flex-direction: column; align-items: center; font-size: 12px; line-height: 18px; letter-spacing: -.5px; }
.notify { position: relative; width: 37px; height: 40px; margin-left: 16px; padding-top: 12px; border-right: 1px solid #777; }
.notify svg { width: 16px; height: 16px; }
.notify b { position: absolute; left: 8px; top: 19px; width: 16px; height: 16px; border: 1px solid #aaa; border-radius: 50%; background: #2b2b2b; font: 11px/14px "Open Sans", sans-serif; text-align: center; }
```
